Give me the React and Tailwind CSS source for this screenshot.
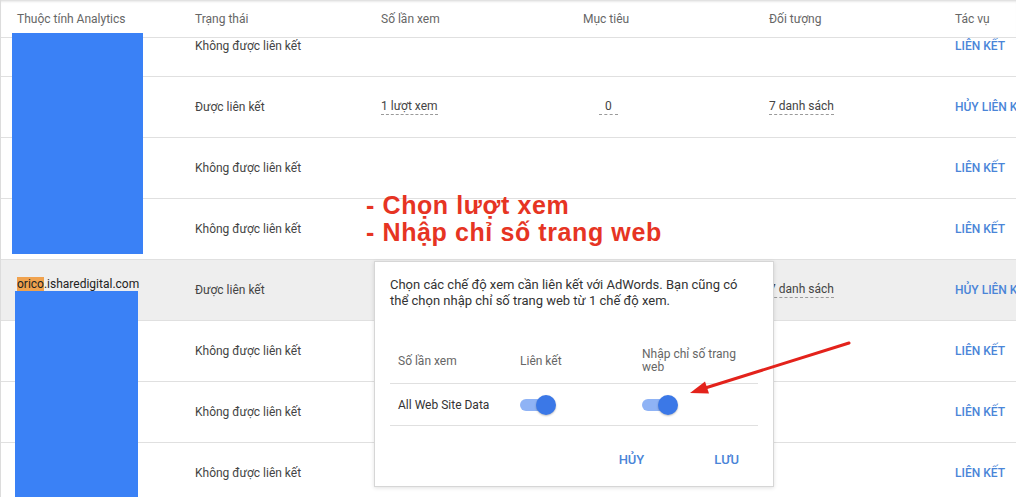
import React from "react";

const cols = "grid grid-cols-[194px_186px_202px_186px_186px_1fr]";

const rows = [
  { status: "Không được liên kết", action: "LIÊN KẾT" },
  { status: "Được liên kết", views: "1 lượt xem", goals: "0", audiences: "7 danh sách", action: "HỦY LIÊN KẾT" },
  { status: "Không được liên kết", action: "LIÊN KẾT" },
  { status: "Không được liên kết", action: "LIÊN KẾT" },
  { status: "Được liên kết", property: true, audiences: "7 danh sách", action: "HỦY LIÊN KẾT", active: true },
  { status: "Không được liên kết", action: "LIÊN KẾT" },
  { status: "Không được liên kết", action: "LIÊN KẾT" },
  { status: "Không được liên kết", action: "LIÊN KẾT" },
];

function Dashed({ children }) {
  return (
    <span className="border-b border-dashed border-[#9a9a9a] leading-[15px]">{children}</span>
  );
}

function Toggle() {
  return (
    <div className="relative w-[36px] h-[20px] flex items-center">
      <div className="h-[12px] w-[30px] rounded-full bg-[#8fb3f5]" />
      <div className="absolute right-0 top-0 h-[20px] w-[20px] rounded-full bg-[#3b78e7] shadow-[0_1px_2px_rgba(0,0,0,0.25)]" />
    </div>
  );
}

function Row({ row }) {
  return (
    <div
      className={`${cols} h-[61px] border-b border-[#e0e0e0] text-[12px] text-[#444] ${
        row.active ? "bg-[#eeeeee]" : "bg-white"
      }`}
    >
      <div className="pl-[16px]">
        {row.property && (
          <div className="pt-[17px] text-[12px] text-[#222] leading-[15px]">
            <span className="bg-[#f0a24e]">orico</span>.isharedigital.com
          </div>
        )}
      </div>
      <div className="flex items-center">{row.status}</div>
      <div className="flex items-center">{row.views && <Dashed>{row.views}</Dashed>}</div>
      <div className="flex items-center pl-[16px]">
        {row.goals && <Dashed>&nbsp;&nbsp;{row.goals}&nbsp;&nbsp;</Dashed>}
      </div>
      <div className="flex items-center">{row.audiences && <Dashed>{row.audiences}</Dashed>}</div>
      <div className="flex items-center font-medium text-[#4a85d8] whitespace-nowrap overflow-hidden">
        {row.action}
      </div>
    </div>
  );
}

export default function App() {
  return (
    <div className="relative w-[1016px] h-[497px] overflow-hidden bg-white border-l border-[#dcdcdc] font-['Roboto','Liberation_Sans',sans-serif]">
      <div
        className={`${cols} h-[38px] items-center border-b border-[#e0e0e0] text-[12px] text-[#666] shadow-[inset_0_3px_3px_-2px_rgba(0,0,0,0.18)]`}
      >
        <div className="pl-[16px]">Thuộc tính Analytics</div>
        <div>Trạng thái</div>
        <div>Số lần xem</div>
        <div>Mục tiêu</div>
        <div>Đối tượng</div>
        <div>Tác vụ</div>
      </div>

      <div className="h-[459px] overflow-hidden">
        <div className="-mt-[22px]">
          {rows.map((row, i) => (
            <Row key={i} row={row} />
          ))}
        </div>
      </div>

      {/* redaction blocks */}
      <div className="absolute left-[11px] top-[33px] w-[131px] h-[221px] bg-[#3a81f6]" />
      <div className="absolute left-[14px] top-[291px] w-[123px] h-[206px] bg-[#3a81f6]" />

      {/* annotation */}
      <div className="absolute left-[365px] top-[192px] text-[25px] leading-[27px] font-bold text-[#e63423] font-['Liberation_Sans',sans-serif] tracking-[0.6px]">
        <div>- Chọn lượt xem</div>
        <div>- Nhập chỉ số trang web</div>
      </div>

      {/* popup */}
      <div className="absolute left-[373px] top-[261px] w-[400px] h-[226px] bg-white border border-[#d6d6d6] shadow-[0_1px_4px_rgba(0,0,0,0.12)] px-[15px] pt-[15px] flex flex-col">
        <p className="text-[13px] leading-[16px] text-[#333]">
          Chọn các chế độ xem cần liên kết với AdWords. Bạn cũng có thể chọn nhập chỉ số trang web từ 1 chế độ xem.
        </p>
        <div className="mt-[29px] w-[368px]">
          <div className="grid grid-cols-[122px_122px_1fr] items-center h-[46px] border-b border-[#e0e0e0] text-[12px] text-[#666]">
            <div className="pl-[8px]">Số lần xem</div>
            <div className="pl-[8px]">Liên kết</div>
            <div className="pl-[8px] max-w-[120px] leading-[13px]">Nhập chỉ số trang web</div>
          </div>
          <div className="grid grid-cols-[122px_122px_1fr] items-center h-[42px] border-b border-[#e0e0e0] text-[12px] text-[#333]">
            <div className="pl-[8px]">All Web Site Data</div>
            <div className="pl-[8px]">
              <Toggle />
            </div>
            <div className="pl-[8px]">
              <Toggle />
            </div>
          </div>
        </div>
        <div className="flex justify-end items-center gap-[70px] h-[61px] pt-[8px] pr-[19px] text-[13px] font-medium text-[#4a85d8]">
          <span>HỦY</span>
          <span>LƯU</span>
        </div>
      </div>

      {/* arrow */}
      <svg className="absolute -left-px top-0" width="1016" height="497" viewBox="0 0 1016 497" fill="none">
        <line x1="849" y1="343" x2="702" y2="389" stroke="#e3221b" strokeWidth="3" strokeLinecap="round" />
        <polygon points="690,393 709,393.5 705,381.5" fill="#e3221b" />
      </svg>
    </div>
  );
}
